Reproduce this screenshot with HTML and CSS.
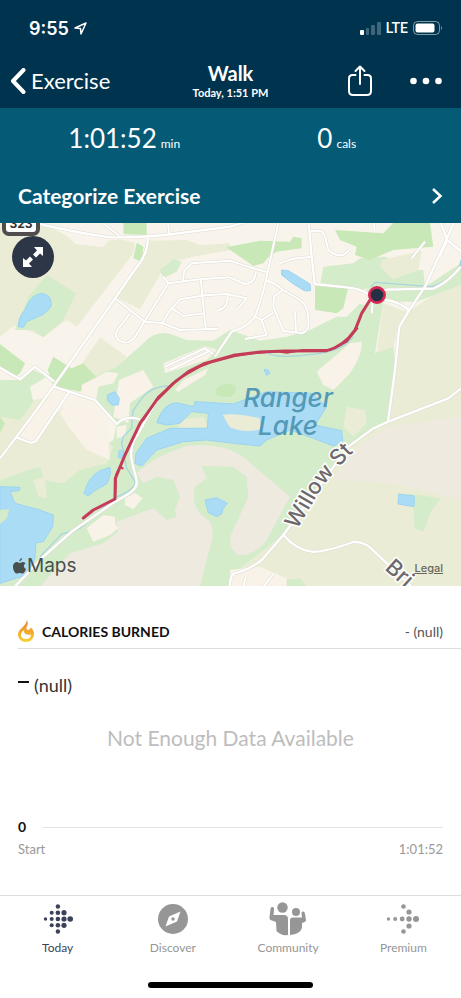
FILE: index.html
```html
<!DOCTYPE html>
<html lang="en">
<head>
    <meta charset="UTF-8">
    <meta name="viewport" content="width=device-width, initial-scale=1.0">
    <title>Walk</title>
    <link rel="stylesheet" href="styles.css">
</head>
<body>
    <header class="header">
        <div class="status-bar">
            <div class="status-left">
                <span class="status-time">9:55</span>
                <svg width="13" height="13" viewBox="0 0 13 13"><path d="M1 6 12 1 7 12 6.500 6.500Z" fill="none" stroke="#fff" stroke-width="1.500" stroke-linejoin="round"/></svg>
            </div>
            <div class="status-right">
                <svg width="21" height="13" viewBox="0 0 21 13" fill="#fff">
                    <rect y="8" width="4" height="5" rx="1"/>
                    <g opacity=".25"><rect x="6" y="6" width="3" height="7" rx="1"/><rect x="11" y="3" width="4" height="10" rx="1"/><rect x="17" width="4" height="13" rx="1"/></g>
                </svg>
                <span class="status-network">LTE</span>
                <svg width="30" height="14" viewBox="0 0 30 14">
                    <rect x=".5" y=".5" width="26" height="13" rx="4" fill="none" stroke="#fff" stroke-opacity=".5"/>
                    <rect x="2.500" y="2.500" width="19" height="9" rx="2" fill="#fff"/>
                    <path d="M28 5q2 2 0 4z" fill="#fff" opacity=".5"/>
                </svg>
            </div>
        </div>
        <div class="nav-bar">
            <button class="back-btn">
                <svg width="16" height="26" viewBox="0 0 16 26"><path d="M13.500 2 3 13 13.500 24" fill="none" stroke="#fff" stroke-width="4" stroke-linecap="round" stroke-linejoin="round"/></svg>
                Exercise
            </button>
            <div class="nav-title">
                <h1>Walk</h1>
                <p>Today, 1:51 PM</p>
            </div>
            <div class="nav-actions">
                <button class="icon-btn" aria-label="Share">
                    <svg width="26" height="32" viewBox="0 0 26 32" fill="none" stroke="#fff" stroke-width="2" stroke-linecap="round" stroke-linejoin="round"><path d="M8.500 10H5.500Q2 10 2 13.500V26Q2 30 6 30H20Q24 30 24 26V13.500Q24 10 20.500 10H17.500M13 19V2M8.500 6 13 1.500 17.500 6"/></svg>
                </button>
                <button class="icon-btn" aria-label="More">
                    <svg width="32" height="8" viewBox="0 0 32 8" fill="#fff"><circle cx="3.500" cy="4" r="3.300"/><circle cx="16" cy="4" r="3.300"/><circle cx="28.500" cy="4" r="3.300"/></svg>
                </button>
            </div>
        </div>
    </header>

    <section class="summary">
        <div class="stats">
            <p class="stat"><span class="stat-value">1:01:52</span> <span class="stat-unit">min</span></p>
            <p class="stat"><span class="stat-value">0</span> <span class="stat-unit">cals</span></p>
        </div>
        <button class="categorize">
            Categorize Exercise
            <svg width="12" height="18" viewBox="0 0 12 18"><path d="M2 2 9.500 9 2 16" fill="none" stroke="#fff" stroke-width="2.500"/></svg>
        </button>
    </section>

    <div class="map">
        <svg class="map-canvas" viewBox="0 3 461 363">
            <defs>
                <g id="roads">
                    <path d="M120 12Q230 38 330 52 420 54 520 42L690 20 730 8"/>
                    <path d="M443 52C445 100 420 130 395 162L345 235 160 500 110 570 50 650 0 715"/>
                    <path d="M-6 440 60 478 105 440 163 485M160 500 208 515 285 540 350 612Q375 585 420 598"/>
                    <path d="M208 515 110 660Q100 672 85 666L50 652"/>
                    <path d="M480 525C450 570 430 620 400 665 380 710 410 760 410 785 412 815 370 830 345 845L215 935 130 1010 45 1100"/>
                    <path d="M1383 140Q1340 190 1300 206L1160 209 1110 225Q1080 205 1040 202L944 192 935 110 926 8"/>
                    <path d="M1383 505 1345 535 1165 605 1120 625 1045 680 850 945 790 1015Q760 1045 700 1062 690 1070 690 1100"/>
                    <path d="M1362 8 1275 200 1225 275 1198 320 1185 450 1164 605"/>
                    <path d="M1155 240Q1200 245 1228 272M1322 8 1342 60 1390 100M850 945Q890 990 935 995 970 998 1060 966 1090 965 1110 982L1240 1105"/>
                </g>
                <g id="streets">
                    <path d="M345 235 435 305 487 309 540 330 655 326M390 280 352 330Q338 360 375 368 395 366 405 350L505 190 600 178 690 172 735 192Q765 192 768 155"/>
                    <path d="M505 190 490 170M549 182 552 155 575 130 690 122 750 142 800 156M602 178 617 325M487 309 510 270 540 238 615 226 680 222 740 235M516 265 550 288 612 280"/>
                    <path d="M650 273Q685 265 683 225M740 235 712 268M835 8 798 180Q785 240 765 290 740 325 695 335L645 410M798 180 825 192 850 210 900 240Q930 260 925 320 915 345 895 338L850 333 820 260 822 230 848 210"/>
                    <path d="M885 275 888 337M765 290 785 300 800 345 735 357M785 300 820 278M930 35Q970 25 975 50L985 90Q1005 110 1030 105L1048 90M838 130 880 116 935 110"/>
                    <path d="M310 10 358 48M504 8 507 40M1122 8 1124 38M495 440 615 385 640 402M510 450 630 392M738 1068 730 1100M790 1100 820 1062M1115 280 1118 245"/>
                    <path d="M1235 115 1275 65M1342 60 1320 110"/>
                </g>
            </defs>

            <g transform="scale(.33333)">
                <rect y="8" width="1383" height="1092" fill="#f8f4eb"/>

                <g class="field">
                    <path d="M0 8 150 20 205 50 225 72 310 82 325 62 360 58 405 68 400 100 230 320 200 300 130 352 60 320 40 318 0 350Z"/>
                    <path d="M445 62 560 60 600 75 690 70V90L590 108 500 130 420 268 345 230 405 150Z"/>
                    <path d="M300 352 380 410 350 440 285 468 245 432ZM430 418 500 425 498 455 450 478 415 455Z"/>
                    <path d="M0 560 150 530 230 680 330 720 260 780 165 840 0 800Z"/>
                    <path d="M1383 195 1300 225 1225 275 1198 330 1185 450 1164 605 1045 680 850 945 700 1062 690 1100H1383Z"/>
                </g>

                <g class="park">
                    <path d="M140 165 228 220 190 300 130 352 100 330 45 330 85 230ZM480 150 520 118 545 125 530 155 490 175ZM0 480 60 480 100 450 140 470 90 500 100 545 60 600 0 590Z"/>
                    <path d="M285 468 350 440 430 370Q470 325 520 345L560 360 640 362 690 330 780 362 860 350 930 330 1010 290 1040 290 1100 230 1130 150 1270 150 1275 200 1383 130V195L1250 245 1150 245 1125 400 1180 370 1185 450 1164 605 1045 680 850 945 700 1062 690 1100H0V780L100 745 240 725 340 660 350 612 290 545Z"/>
                    <path d="M970 140 1060 130 1080 115 1160 110 1190 160 1120 215 960 195Z"/>
                </g>

                <g class="grass">
                    <path d="M370 8H440V45L370 42ZM410 68 430 80 425 125 400 115ZM160 410 215 445 250 430 292 475 240 515 160 498 143 450ZM0 372 75 430 60 460 45 470 0 440Z"/>
                    <path d="M678 82 780 62 870 65 880 50 905 55 905 85 830 95 805 112 790 130 760 138 720 110ZM1005 30 1150 40 1180 8H1290L1300 80 1180 90 1110 120 1065 105 1070 80 1020 60ZM945 195 1045 202 1030 265 1010 280 945 270Z"/>
                    <path d="M650 505Q670 485 705 495 715 520 690 530 660 535 648 520ZM160 590 215 620 205 632 165 612ZM0 590 15 610 0 640Z"/>
                </g>

                <!-- fields inside the park -->
                <g class="field">
                    <path d="M0 640 100 670 190 560 340 680 320 730 240 750 190 790 130 780 120 730 60 740 0 760ZM670 590Q690 575 770 592L780 620 690 628ZM530 600 610 590 625 620 540 625ZM100 780 135 770 140 835 115 830ZM1040 560 1095 570 1100 610 1060 650 1030 620Z"/>
                    <path d="M1145 120 1265 92 1255 150 1180 178 1140 140ZM1150 250 1220 275 1195 320 1180 380 1130 398Z"/>
                </g>

                <g class="bare">
                    <path d="M410 760Q460 710 560 678 680 665 740 720L870 830 800 960Q760 1010 715 1005 680 980 695 940L745 830 740 770 700 740 605 738 620 775 585 800Q570 870 625 900 650 930 625 1000L600 1100H120L210 1000 310 970 355 935 350 905 460 865 500 900 530 890 525 870 540 830 520 780 470 770 430 790Z"/>
                    <path d="M1050 700 1164 620 1383 590V840L1270 810 1180 790 1000 780Z"/>
                </g>
                <g class="cream">
                    <path d="M204 518 110 668 52 655 165 505ZM215 525 285 545 320 600 330 720 260 690 205 620 180 580ZM245 495 320 455 355 460 340 490 295 500 290 530 245 520Z"/>
                    <path d="M357 480 430 450 460 500 390 550 385 610 340 590ZM490 430 615 378 650 390 620 420 495 460ZM525 510 550 480 625 445 615 465 535 515Z"/>
                    <path d="M950 455 1050 370 1085 365Q1090 400 1050 460L1000 510 970 495ZM260 925 310 885 345 890 345 910 355 925 330 945 280 965ZM375 835 405 818 428 835 400 868 375 855ZM690 1050 780 1040 860 1075V1100H690Z"/>
                    <path d="M1040 225 1100 205 1110 250 1090 255 1040 240ZM350 620 380 615 375 650 350 655Z"/>
                </g>
                <path class="park" d="M1220 820 1323 835 1295 870 1270 935 1243 925 1240 860ZM860 1080 900 1075 920 1100H860ZM815 910 850 940 830 925Z"/>

                <g class="water">
                    <path d="M55 320Q55 290 75 270 90 225 125 220 155 225 154 255 145 280 110 292L80 305 70 322ZM322 525 345 515 358 535 355 555 335 555 322 540ZM845 150 865 152 930 192 932 212 915 213 880 192 845 165ZM792 448 805 450 810 460 800 466Z"/>
                    <path d="M252 820Q265 770 300 752L330 742 332 760 322 790 280 815 265 828ZM615 840 650 833 682 850 670 865 665 882 650 890 625 878ZM1196 822 1243 828 1242 860 1194 852Z"/>
                    <path d="M470 608Q490 550 530 548L580 560 585 545 700 552 800 515 935 520 980 560 945 615 1025 632 1028 665 1000 678 940 655 870 630 800 660 780 678 700 670 620 660 550 665 470 690 425 738 405 730 408 700 440 655 510 625 622 625 625 580 575 575 540 610 500 615Z"/>
                    <path d="M0 800 60 802 58 812 30 815 45 850 120 870 160 885 158 920 130 965 108 968 105 1015 80 1065 0 1090ZM358 690 372 695 365 715 355 712ZM1383 120 1376 145 1383 150Z"/>
                </g>
                <path class="field" d="M668 585Q700 578 780 595L782 628Q730 640 690 622Z"/>
                <path class="park" d="M0 870 28 868 20 895 0 912Z"/>
                <path class="stream" d="M505 498C440 500 420 540 398 575L395 625 370 650 365 670 380 745 405 785Q405 810 345 832L240 925 185 942 120 1010M1383 135Q1340 190 1295 200L1125 187 1112 200M805 400Q830 418 960 400 1030 390 1060 350"/>

                <use href="#streets" class="casing casing-thin"/>
                <use href="#roads" class="casing"/>
                <use href="#streets" class="road road-thin"/>
                <use href="#roads" class="road"/>

                <!-- walked route -->
                <path class="route" d="M250 894 280 870 345 837 346 775 375 705 420 610 470 540 520 490 565 455 615 430 700 406 780 396 855 393 980 392Q1030 380 1065 330 1078 300 1085 280L1110 240"/>
                <path class="route route-thin" d="M345 837 348 765 360 740 368 745M430 600 475 530 530 480 600 440 640 425 705 408 760 400 830 394 860 398 910 390 990 390 1040 365 1072 325"/>
                <circle cx="1131" cy="225" r="23" fill="#263044" stroke="#d92855" stroke-width="8"/>
            </g>

            <!-- labels -->
            <g class="lake-label">
                <text x="288" y="187">Ranger</text>
                <text x="288" y="215">Lake</text>
            </g>
            <g class="road-label">
                <path id="willow" d="M297 310 318 274Q330 254 362 224" fill="none" stroke="none"/>
                <text><textPath href="#willow">Willow St</textPath></text>
                <text transform="translate(384 349) rotate(42)">Bri</text>
            </g>
            <rect x="4" y="-14" width="34" height="28" rx="5" fill="#fff" stroke="#514d4d" stroke-width="4"/>
            <text class="shield-label" x="21" y="8">323</text>
        </svg>
        <button class="expand-btn" aria-label="Expand map">
            <svg width="22" height="22" viewBox="0 0 22 22" fill="#fff"><path d="M12 1H21V10L18 7.500 14 11.500 11 8.500 15 4.500ZM10 21H1V12L4 14.500 8 10.500 11 13.500 7 17.500Z"/></svg>
        </button>
        <div class="map-brand">
            <svg width="13" height="16" viewBox="0 0 13 16" fill="#47504c"><path d="M9 0Q9 3 6.400 3.800 6.200 1 9 0ZM6.500 5C8 5 8.500 4 10 4Q12 4.200 12.600 5.600C10 7 10.600 10 13 11 12 14 10.500 15.500 9.500 15.500 8 15.500 8 14.900 6.700 14.900S5 15.600 4 15.600C1.800 15.600 0 11.500 0 9 0 5.500 2 4 4 4 5 4 5.800 5 6.500 5Z"/></svg>
            <span>Maps</span>
        </div>
        <a class="map-legal" href="#">Legal</a>
    </div>

    <main class="calories">
        <div class="calories-header">
            <svg width="16" height="22" viewBox="0 0 16 22">
                <defs><linearGradient id="flame" x1="0" y1="0" x2="0" y2="1"><stop offset="0" stop-color="#e88434"/><stop offset=".5" stop-color="#f2a52d"/><stop offset="1" stop-color="#f8d32f"/></linearGradient></defs>
                <path d="M9 0C10.500 3 9.500 5 8.700 7 7.800 9 8.500 9.500 9.700 10 11.500 10 12.500 9 12.500 7.500 15 9 16 11.500 16 14 16 18.500 12.500 22 8 22S0 18.500 0 14.500C0 9 8.500 6 9 0ZM6.300 10C3.500 12 3 13 3 15 3 17.500 5 19 8 19S13 17.500 13 14.500C12 15 10.500 15 9 14.600 6.500 14 5.500 12.500 6.300 10Z" fill="url(#flame)"/>
            </svg>
            <h2>Calories burned</h2>
            <span class="calories-total">- (null)</span>
        </div>
        <p class="reading"><span class="reading-dash"></span>(null)</p>
        <p class="empty">Not Enough Data Available</p>
        <div class="axis"><span>0</span><hr></div>
        <div class="axis-labels"><span>Start</span><span>1:01:52</span></div>
    </main>

    <nav class="tab-bar">
        <a class="tab active" href="#">
            <svg width="30" height="30" viewBox="0 0 30 30" fill="currentColor"><circle cx="2.500" cy="15" r="1.700"/><circle cx="8.700" cy="8.700" r="2"/><circle cx="8.700" cy="15" r="2"/><circle cx="8.700" cy="21.300" r="2"/><circle cx="14.900" cy="2.500" r="2.200"/><circle cx="14.900" cy="8.700" r="2.300"/><circle cx="14.900" cy="15" r="2.300"/><circle cx="14.900" cy="21.300" r="2.300"/><circle cx="14.900" cy="27.500" r="2.200"/><circle cx="21" cy="8.700" r="2.600"/><circle cx="21" cy="15" r="2.600"/><circle cx="21" cy="21.300" r="2.600"/><circle cx="27.200" cy="15" r="2.800"/></svg>
            Today
        </a>
        <a class="tab" href="#">
            <svg width="30" height="30" viewBox="0 0 30 30"><circle cx="15" cy="15" r="15" fill="currentColor"/><path d="M22.500 7.500 19 17.500 7.500 22.500 11 12.500Z" fill="#fff"/><circle cx="15" cy="15" r="1.700" fill="currentColor"/></svg>
            Discover
        </a>
        <a class="tab" href="#">
            <svg width="38" height="34" viewBox="0 0 38 34" fill="currentColor"><circle cx="13.500" cy="5.500" r="5.200"/><circle cx="27" cy="10" r="4"/><path d="M1.500 7Q1.500 4.500 4 5 5.500 5.500 5 8L4.500 13H15Q19 13 19 17V33Q12 34 7.500 29L7 20 1.500 18Q0 17 .5 15ZM21 33V18Q21 15.500 24 15.500H33L32.500 11Q32.500 9 34.500 9.500 36 10 36 12L37 18Q37 20 33 21V26Q31 32 21 33Z"/></svg>
            Community
        </a>
        <a class="tab" href="#">
            <svg width="34" height="30" viewBox="0 0 34 30" fill="currentColor"><circle cx="2.500" cy="15" r="1.700"/><circle cx="9.200" cy="15" r="2"/><circle cx="16.200" cy="15" r="2.400"/><circle cx="23" cy="15" r="2.700"/><circle cx="30" cy="15" r="3"/><circle cx="17.500" cy="2.500" r="2.300"/><circle cx="23" cy="8" r="2.600"/><circle cx="23" cy="22" r="2.600"/><circle cx="17.500" cy="27.500" r="2.300"/></svg>
            Premium
        </a>
    </nav>
    <div class="home-indicator"></div>
</body>
</html>
```
FILE: styles.css
```css
* {
    box-sizing: border-box;
}

body {
    display: flex;
    flex-direction: column;
    min-height: 100vh;
    margin: 0;
    background-color: #fff;
    color: #111;
    font-family: Lato, "Liberation Sans", sans-serif;
}

h1, h2, p {
    margin: 0;
}

svg {
    display: block;
    flex-shrink: 0;
}

button {
    padding: 0;
    border: none;
    background: none;
    color: inherit;
    font-family: inherit;
    cursor: pointer;
}

/* header */
.header {
    background-color: #00334d;
    color: #fff;
}

.status-bar {
    display: flex;
    justify-content: space-between;
    align-items: center;
    height: 56px;
    padding: 0 18px 0 29px;
    font-family: Inter, sans-serif;
}

.status-left, .status-right {
    display: flex;
    align-items: center;
    gap: 5px;
}

.status-time {
    font-size: 18px;
    font-weight: 600;
}

.status-network {
    font-family: Roboto, sans-serif;
    font-size: 14px;
    font-weight: 500;
}

.nav-bar {
    display: grid;
    grid-template-columns: 1fr auto 1fr;
    align-items: center;
    height: 52px;
    padding: 0 10px 2px;
}

.back-btn {
    display: flex;
    align-items: center;
    gap: 5px;
    font-size: 22px;
    line-height: 26px;
}

.nav-title {
    text-align: center;
}

.nav-title h1 {
    font-size: 20px;
    line-height: 24px;
    font-weight: 700;
}

.nav-title p {
    font-size: 11px;
    line-height: 16px;
    font-weight: 700;
}

.nav-actions {
    display: flex;
    justify-content: flex-end;
    align-items: center;
    gap: 37px;
    padding-right: 9px;
}

/* summary */
.summary {
    background-color: #055a76;
    color: #fff;
}

.stats {
    display: grid;
    grid-template-columns: 1fr 1fr;
    padding: 12px 18px 6px;
}

.stat {
    display: flex;
    justify-content: center;
    align-items: baseline;
    gap: 4px;
    line-height: 36px;
}

.stat-value {
    font-size: 26px;
}

.stat-unit {
    font-size: 12px;
}

.categorize {
    display: flex;
    justify-content: space-between;
    align-items: center;
    width: 100%;
    height: 55px;
    padding: 0 18px;
    font-size: 21px;
    font-weight: 700;
}

/* map */
.map {
    position: relative;
}

.map-canvas {
    width: 100%;
    height: auto;
}

.field {
    fill: #ebecd6;
}

.park {
    fill: #d5ecca;
}

.grass {
    fill: #c8e9b7;
}

.bare {
    fill: #efeae0;
}

.cream {
    fill: #f8f2e8;
}

.water {
    fill: #abdcf5;
    stroke: #9bd3f1;
    stroke-width: 3;
    stroke-linejoin: round;
}

.stream {
    fill: none;
    stroke: #a8d5e0;
    stroke-width: 4;
}

.casing, .road {
    fill: none;
    stroke-linejoin: round;
}

.casing {
    stroke: #dedbd2;
    stroke-width: 10;
}

.casing-thin {
    stroke-width: 9;
}

.road {
    stroke: #fff;
    stroke-width: 7;
}

.road-thin {
    stroke-width: 6;
}

.route {
    fill: none;
    stroke: #c33d58;
    stroke-width: 9;
    stroke-linecap: round;
    stroke-linejoin: round;
}

.route-thin {
    stroke-width: 6;
}

.lake-label {
    fill: #5499b6;
    font-family: Inter, sans-serif;
    font-size: 26px;
    font-style: italic;
    font-weight: 500;
    text-anchor: middle;
}

.road-label {
    fill: #6e6a6c;
    stroke: #fff;
    stroke-width: 3;
    paint-order: stroke;
    font-family: Inter, sans-serif;
    font-size: 22px;
    font-weight: 500;
}

.shield-label {
    fill: #333;
    font-family: Inter, sans-serif;
    font-size: 12px;
    font-weight: 700;
    text-anchor: middle;
}

.expand-btn {
    position: absolute;
    top: 13px;
    left: 12px;
    display: flex;
    justify-content: center;
    align-items: center;
    width: 42px;
    height: 42px;
    border-radius: 50%;
    background-color: #2d3646;
}

.map-brand {
    position: absolute;
    bottom: 8px;
    left: 13px;
    display: flex;
    align-items: center;
    gap: 1px;
    color: #47504c;
    font-family: Inter, sans-serif;
    font-size: 19px;
    line-height: 24px;
}

.map-legal {
    position: absolute;
    right: 18px;
    bottom: 10px;
    color: #66675f;
    font-family: Inter, sans-serif;
    font-size: 11px;
    line-height: 16px;
    font-weight: 500;
}

/* calories */
.calories {
    padding: 28px 18px 0;
}

.calories-header {
    display: flex;
    align-items: center;
    gap: 8px;
    height: 35px;
    margin-right: -18px;
    padding-right: 18px;
    border-bottom: 1px solid #dedede;
}

.calories-header h2 {
    font-size: 14px;
    font-weight: 700;
    text-transform: uppercase;
}

.calories-total {
    margin-left: auto;
    color: #555;
    font-size: 14px;
}

.reading {
    display: flex;
    align-items: center;
    gap: 5px;
    margin-top: 24px;
    color: #333;
    font-size: 18px;
    line-height: 24px;
}

.reading-dash {
    width: 11px;
    height: 2px;
    margin-bottom: 7px;
    background-color: #111;
}

.empty {
    margin-top: 27px;
    color: #bdbdbd;
    font-size: 21px;
    line-height: 28px;
    text-align: center;
}

.axis {
    display: flex;
    align-items: center;
    gap: 16px;
    margin-top: 65px;
    font-size: 14px;
    line-height: 20px;
    font-weight: 700;
}

.axis hr {
    flex: 1;
    margin: 0;
    border: none;
    border-top: 1px solid #e5e5e5;
}

.axis-labels {
    display: flex;
    justify-content: space-between;
    margin-top: 2px;
    color: #999;
    font-size: 13px;
    line-height: 20px;
}

/* tab bar */
.tab-bar {
    display: grid;
    grid-template-columns: repeat(4, 1fr);
    margin-top: auto;
    border-top: 1px solid #dedede;
}

.tab {
    display: grid;
    grid-template-rows: 45px 14px;
    place-items: center;
    color: #969696;
    font-size: 12px;
    line-height: 14px;
    text-decoration: none;
}

.tab.active {
    color: #3b4258;
}

.home-indicator {
    width: 36%;
    height: 6px;
    margin: 27px auto 10px;
    border-radius: 3px;
    background-color: #000;
}
```
